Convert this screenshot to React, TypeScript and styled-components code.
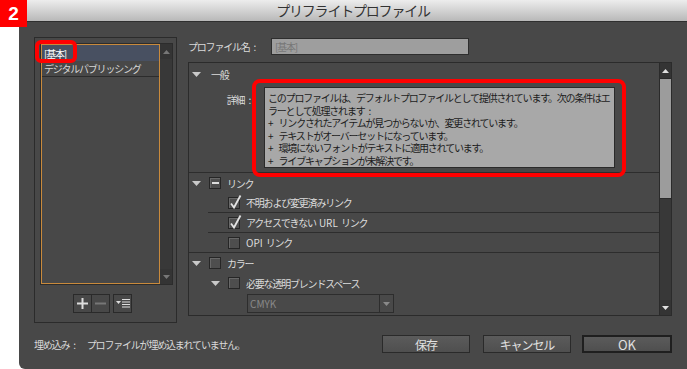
import React from "react";
import styled, { createGlobalStyle } from "styled-components";

const Global = createGlobalStyle`
  html, body { margin: 0; padding: 0; background: #ffffff; }
  body { font-family: "Noto Sans CJK JP", "Noto Sans", sans-serif; }
  * { box-sizing: border-box; }
`;

const Page = styled.div`
  position: relative;
  width: 687px;
  height: 369px;
  overflow: hidden;
`;

const Badge = styled.div`
  position: absolute;
  top: 0;
  left: 0;
  width: 27px;
  height: 27px;
  background: #ff0000;
  color: #ffffff;
  font-family: "Liberation Sans", Arial, sans-serif;
  font-weight: bold;
  font-size: 19px;
  display: flex;
  align-items: center;
  justify-content: center;
  z-index: 3;
`;

const Dialog = styled.div`
  margin-left: 19px;
  width: 668px;
  height: 369px;
  background: #484848;
  border-bottom-left-radius: 6px;
  display: flex;
  flex-direction: column;
  font-size: 10px;
  letter-spacing: -0.12em;
  color: #dcdcdc;
`;

const TitleBar = styled.div`
  height: 22px;
  flex: none;
  background: linear-gradient(#ededed, #b8b8b8);
  border-bottom: 1px solid #2f2f2f;
  display: flex;
  align-items: center;
  justify-content: center;
  font-size: 14px;
  color: #333333;
  padding-bottom: 1px;
`;

const Content = styled.div`
  flex: 1;
  display: flex;
  flex-direction: column;
  padding: 15px 15px 0 15px;
`;

const MainRow = styled.div`
  display: flex;
  gap: 11px;
`;

const LeftBox = styled.div`
  width: 143px;
  flex: none;
  height: 286px;
  border: 1px solid #2b2b2b;
  padding: 5px 3px 0 5px;
  display: flex;
  flex-direction: column;
`;

const ListWrap = styled.div`
  height: 242px;
  border: 1px solid #2c2c2c;
  display: flex;
`;

const List = styled.div`
  flex: 1;
  border: 1px solid #c98a3c;
  display: flex;
  flex-direction: column;
`;

const ListRow = styled.div<{ $selected?: boolean }>`
  position: relative;
  height: 16px;
  padding-left: 2px;
  display: flex;
  align-items: center;
  background: ${(p) => (p.$selected ? "#485061" : "transparent")};
  color: ${(p) => (p.$selected ? "#ffffff" : "#d6d6d6")};
  border-bottom: ${(p) => (p.$selected ? "none" : "1px solid #2c2c2c")};
  white-space: nowrap;
`;

const RedMark = styled.div<{ $w: number; $h: number; $l: number; $t: number; $r: number }>`
  position: absolute;
  left: ${(p) => p.$l}px;
  top: ${(p) => p.$t}px;
  width: ${(p) => p.$w}px;
  height: ${(p) => p.$h}px;
  border: 4px solid #ff0000;
  border-radius: ${(p) => p.$r}px;
  pointer-events: none;
  z-index: 2;
`;

const ScrollBar = styled.div<{ $panel?: boolean }>`
  width: 12px;
  flex: none;
  background: #363636;
  display: flex;
  flex-direction: column;
  border-left: ${(p) => (p.$panel ? "1px solid #2a2a2a" : "none")};
`;

const ArrowCell = styled.div`
  height: 15px;
  flex: none;
  display: flex;
  align-items: center;
  justify-content: center;
  background: #343434;
`;

const Thumb = styled.div`
  height: 121px;
  flex: none;
  background: #9c9c9c;
  border-top: 1px solid #2a2a2a;
  border-bottom: 1px solid #2a2a2a;
`;

const Track = styled.div`
  flex: 1;
  background: #383838;
`;

const ToolRow = styled.div`
  margin-top: 9px;
  padding-left: 33px;
  display: flex;
  gap: 3px;
`;

const ToolGroup = styled.div`
  display: flex;
`;

const ToolBtn = styled.div`
  width: 19px;
  height: 19px;
  border: 1px solid #2a2a2a;
  margin-left: -1px;
  display: flex;
  align-items: center;
  justify-content: center;
  &:first-child { margin-left: 0; }
`;

const RightCol = styled.div`
  flex: 1;
  display: flex;
  flex-direction: column;
`;

const NameRow = styled.div`
  margin-top: 1px;
  display: flex;
  align-items: center;
  height: 17px;
`;

const NameLabel = styled.div`
  width: 83px;
  flex: none;
  white-space: nowrap;
  color: #dadada;
`;

const NameInput = styled.div`
  width: 198px;
  height: 17px;
  background: #9e9e9e;
  border: 1px solid #2e2e2e;
  color: #777777;
  padding-left: 3px;
  display: flex;
  align-items: center;
`;

const Panel = styled.div`
  margin-top: 7px;
  height: 254px;
  border: 1px solid #2b2b2b;
  display: flex;
`;

const PanelBody = styled.div`
  flex: 1;
  display: flex;
  flex-direction: column;
  padding-top: 1px;
`;

const Row = styled.div<{ $indent: number; $line?: "full" | "inset" }>`
  height: 20px;
  flex: none;
  display: flex;
  align-items: center;
  padding-left: ${(p) => p.$indent}px;
  margin-left: ${(p) => (p.$line === "inset" ? 19 : 0)}px;
  border-bottom: ${(p) => (p.$line ? "1px solid #2d2d2d" : "none")};
  white-space: nowrap;
  color: #dcdcdc;
`;

const Tri = styled.svg`
  flex: none;
  margin-right: 8px;
`;

const Label = styled.span<{ $gap?: number }>`
  margin-left: ${(p) => p.$gap ?? 0}px;
`;

const Latin = styled.span<{ $l?: number; $r?: number }>`
  letter-spacing: 0;
  margin-left: ${(p) => p.$l ?? 3}px;
  margin-right: ${(p) => p.$r ?? 3}px;
`;

const Colon = styled.span`
  margin-left: 4px;
`;

const Plus = styled.span`
  margin-right: 5px;
  letter-spacing: 0;
`;

const Box = styled.div`
  position: relative;
  width: 12px;
  height: 12px;
  flex: none;
  background: #4e4e4e;
  border: 1px solid #262626;
  box-shadow: inset 1px 1px 0 #686868;
  display: flex;
  align-items: center;
  justify-content: center;
  margin-right: 6px;
`;

const Minus = styled.div`
  width: 7px;
  height: 2px;
  background: #dddddd;
`;

const CheckMark = styled.svg`
  position: absolute;
  left: 0px;
  top: -4px;
`;

const Details = styled.div`
  display: flex;
  margin-top: 3px;
  padding-bottom: 4px;
  border-bottom: 1px solid #2d2d2d;
`;

const DetailsLabel = styled.div`
  width: 61px;
  flex: none;
  text-align: right;
  padding-top: 5px;
  color: #dadada;
  white-space: nowrap;
`;

const DetailsBox = styled.div`
  position: relative;
  flex: none;
  margin-left: 14px;
  width: 351px;
  height: 81px;
  background: #a8a8a8;
  border: 1px solid #2a2a2a;
  padding: 4px 3px;
  color: #1c1c1c;
  line-height: 12.6px;
`;

const Line = styled.div`
  white-space: nowrap;
  height: 12.6px;
`;

const Select = styled.div`
  margin-left: 58px;
  margin-top: 1px;
  width: 147px;
  height: 19px;
  border: 1px solid #2d2d2d;
  background: #494949;
  display: flex;
  color: #8a8a8a;
`;

const SelectText = styled.div`
  flex: 1;
  padding-left: 1px;
  display: flex;
  align-items: center;
`;

const SelectArrow = styled.div`
  width: 14px;
  border-left: 1px solid #2d2d2d;
  display: flex;
  align-items: center;
  justify-content: center;
`;

const BottomRow = styled.div`
  margin-top: 12px;
  display: flex;
  align-items: center;
  height: 18px;
`;

const Status = styled.div`
  flex: 1;
  color: #dadada;
  white-space: nowrap;
`;

const Btn = styled.div<{ $primary?: boolean; $w: number }>`
  width: ${(p) => p.$w}px;
  height: 18px;
  margin-left: ${(p) => (p.$primary ? 11 : 13)}px;
  background: linear-gradient(#5b5b5b, #4f4f4f);
  border: ${(p) => (p.$primary ? "2px solid #1f1f1f" : "1px solid #2a2a2a")};
  color: #e0e0e0;
  font-size: ${(p) => (p.$primary ? 13 : 12)}px;
  letter-spacing: ${(p) => (p.$primary ? "0" : "-0.09em")};
  display: flex;
  align-items: center;
  justify-content: center;
`;

const DownTri = ({ c = "#c9c9c9", w = 9, h = 5 }: { c?: string; w?: number; h?: number }) => (
  <Tri width={w} height={h} viewBox={`0 0 ${w} ${h}`}>
    <polygon points={`0,0 ${w},0 ${w / 2},${h}`} fill={c} />
  </Tri>
);

const SmallArrow = ({ up, c }: { up?: boolean; c: string }) => (
  <svg width="7" height="4" viewBox="0 0 7 4">
    <polygon points={up ? "0,4 7,4 3.5,0" : "0,0 7,0 3.5,4"} fill={c} />
  </svg>
);

const Check = ({ checked, minus }: { checked?: boolean; minus?: boolean }) => (
  <Box>
    {minus && <Minus />}
    {checked && (
      <CheckMark width="14" height="16" viewBox="0 0 14 16">
        <path d="M2 9.5 L5 13.5 L11.5 1.5" stroke="#e2e2e2" strokeWidth="1.8" fill="none" />
      </CheckMark>
    )}
  </Box>
);

export default function App() {
  return (
    <Page>
      <Global />
      <Badge>2</Badge>
      <Dialog>
        <TitleBar>プリフライトプロファイル</TitleBar>
        <Content>
          <MainRow>
            <LeftBox>
              <ListWrap>
                <List>
                  <ListRow $selected>
                    [基本]
                    <RedMark $l={-7} $t={-5} $w={42} $h={23} $r={6} />
                  </ListRow>
                  <ListRow>デジタルパブリッシング</ListRow>
                </List>
                <ScrollBar>
                  <ArrowCell>
                    <SmallArrow up c="#777777" />
                  </ArrowCell>
                  <Track />
                  <ArrowCell>
                    <SmallArrow c="#777777" />
                  </ArrowCell>
                </ScrollBar>
              </ListWrap>
              <ToolRow>
                <ToolGroup>
                  <ToolBtn>
                    <svg width="11" height="11" viewBox="0 0 11 11">
                      <rect x="4.5" y="0" width="2" height="11" fill="#dddddd" />
                      <rect x="0" y="4.5" width="11" height="2" fill="#dddddd" />
                    </svg>
                  </ToolBtn>
                  <ToolBtn>
                    <svg width="11" height="11" viewBox="0 0 11 11">
                      <rect x="0" y="4.5" width="11" height="2" fill="#777777" />
                    </svg>
                  </ToolBtn>
                </ToolGroup>
                <ToolGroup>
                  <ToolBtn>
                    <svg width="14" height="9" viewBox="0 0 14 9">
                      <polygon points="0,2 5,2 2.5,5" fill="#dddddd" />
                      <rect x="6" y="0" width="8" height="1" fill="#dddddd" />
                      <rect x="6" y="2.5" width="8" height="1" fill="#dddddd" />
                      <rect x="6" y="5" width="8" height="1" fill="#dddddd" />
                      <rect x="6" y="7.5" width="8" height="1" fill="#dddddd" />
                    </svg>
                  </ToolBtn>
                </ToolGroup>
              </ToolRow>
            </LeftBox>
            <RightCol>
              <NameRow>
                <NameLabel>
                  プロファイル名<Colon>:</Colon>
                </NameLabel>
                <NameInput>[基本]</NameInput>
              </NameRow>
              <Panel>
                <PanelBody>
                  <Row $indent={3}>
                    <DownTri />
                    <Label $gap={2}>一般</Label>
                  </Row>
                  <Details>
                    <DetailsLabel>
                      詳細<Colon>:</Colon>
                    </DetailsLabel>
                    <DetailsBox>
                      <Line>このプロファイルは、デフォルトプロファイルとして提供されています。次の条件はエ</Line>
                      <Line>
                        ラーとして処理されます<Colon>:</Colon>
                      </Line>
                      <Line>
                        <Plus>+</Plus>リンクされたアイテムが見つからないか、変更されています。
                      </Line>
                      <Line>
                        <Plus>+</Plus>テキストがオーバーセットになっています。
                      </Line>
                      <Line>
                        <Plus>+</Plus>環境にないフォントがテキストに適用されています。
                      </Line>
                      <Line>
                        <Plus>+</Plus>ライブキャプションが未解決です。
                      </Line>
                      <RedMark $l={-13} $t={-9} $w={374} $h={98} $r={8} />
                    </DetailsBox>
                  </Details>
                  <Row $indent={3}>
                    <DownTri />
                    <Check minus />
                    <Label>リンク</Label>
                  </Row>
                  <Row $indent={20} $line="inset">
                    <Check checked />
                    <Label>不明および変更済みリンク</Label>
                  </Row>
                  <Row $indent={20} $line="inset">
                    <Check checked />
                    <Label>
                      アクセスできない<Latin>URL</Latin>リンク
                    </Label>
                  </Row>
                  <Row $indent={39} $line="full">
                    <Check />
                    <Label>
                      <Latin $l={0}>OPI</Latin>リンク
                    </Label>
                  </Row>
                  <Row $indent={3}>
                    <DownTri />
                    <Check />
                    <Label>カラー</Label>
                  </Row>
                  <Row $indent={22}>
                    <DownTri />
                    <Check />
                    <Label>必要な透明ブレンドスペース</Label>
                  </Row>
                  <Select>
                    <SelectText>
                      <Latin $l={1}>CMYK</Latin>
                    </SelectText>
                    <SelectArrow>
                      <SmallArrow c="#8a8a8a" />
                    </SelectArrow>
                  </Select>
                </PanelBody>
                <ScrollBar $panel>
                  <ArrowCell>
                    <SmallArrow up c="#e0e0e0" />
                  </ArrowCell>
                  <Thumb />
                  <Track />
                  <ArrowCell>
                    <SmallArrow c="#e0e0e0" />
                  </ArrowCell>
                </ScrollBar>
              </Panel>
            </RightCol>
          </MainRow>
          <BottomRow>
            <Status>
              埋め込み<Colon>:</Colon>
              <Label $gap={12}>プロファイルが埋め込まれていません。</Label>
            </Status>
            <Btn $w={88}>保存</Btn>
            <Btn $w={88}>キャンセル</Btn>
            <Btn $w={90} $primary>
              OK
            </Btn>
          </BottomRow>
        </Content>
      </Dialog>
    </Page>
  );
}
